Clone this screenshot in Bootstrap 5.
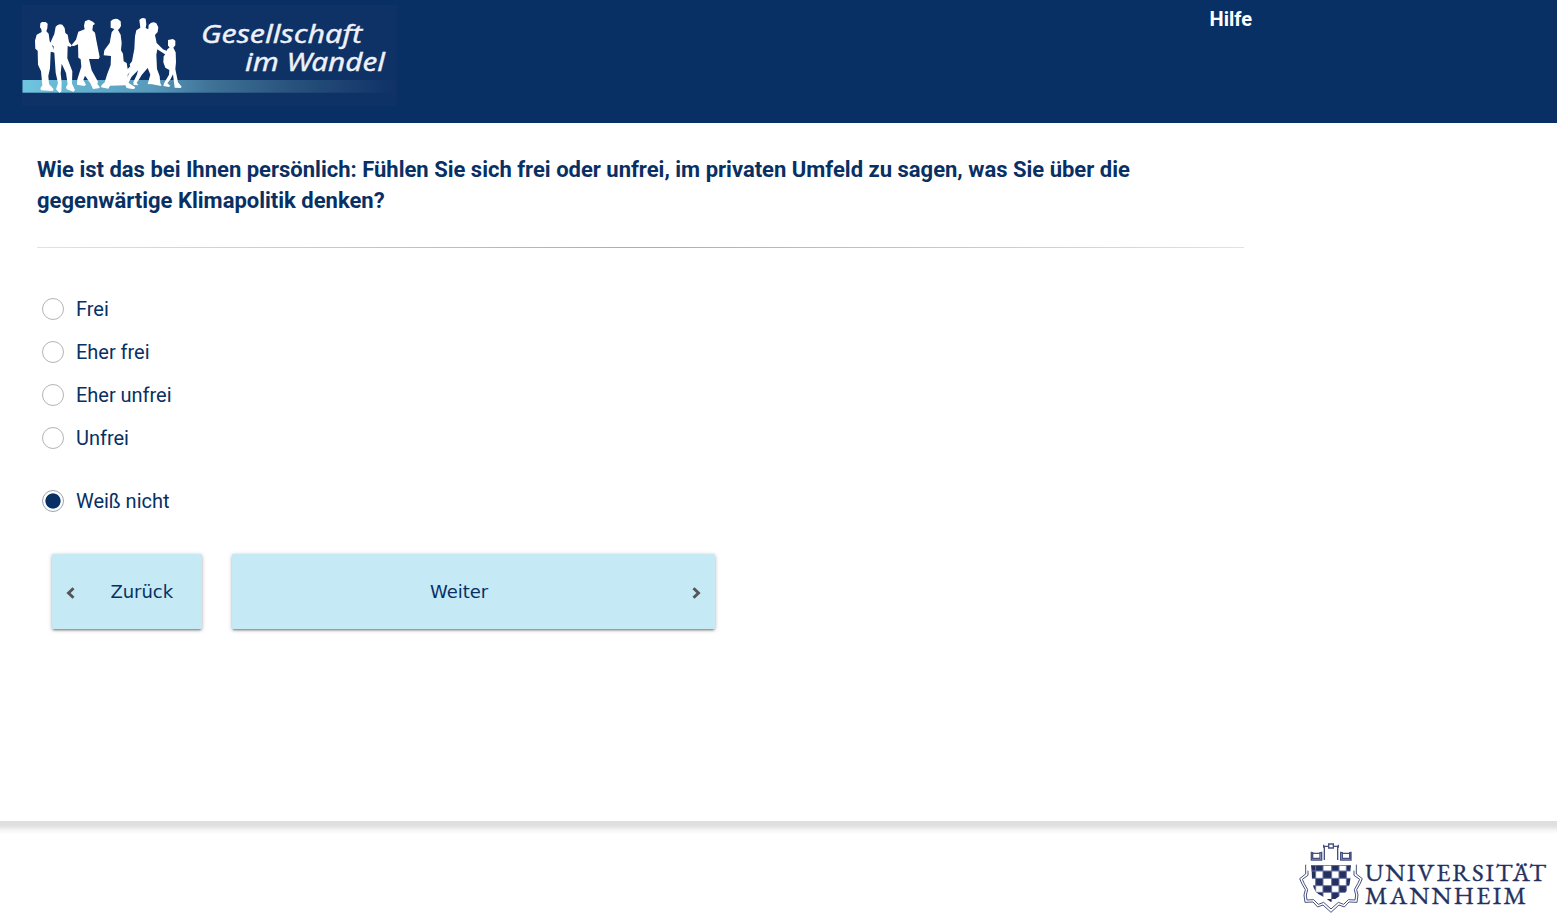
<!DOCTYPE html>
<html lang="de">
<head>
<meta charset="utf-8">
<title>Gesellschaft im Wandel</title>
<link href="https://cdn.jsdelivr.net/npm/bootstrap@5.3.0/dist/css/bootstrap.min.css" rel="stylesheet">
<style>
body{font-family:Roboto,sans-serif;color:#083064;height:920px;overflow:hidden;background:#fff}
.site-head{background:#083064;height:123px;padding:5px 305px 0 22px}
.site-head a{font-size:20px;line-height:28px;font-weight:700}
.logo-type{font-family:"Noto Sans","Open Sans",sans-serif;font-style:italic;fill:#eef2f8;stroke:#eef2f8;stroke-width:.35}
.survey{width:1244px;height:698px;padding:31px 0 0 37px}
.question{font-size:22px;line-height:31px;font-weight:700;margin:0;width:1130px}
.rule{height:1px;margin:31px 0 39px;background:linear-gradient(90deg,#e2e2e2,#adadad 50%,#e2e2e2)}
.answer{height:43px;padding-left:5px;gap:12px;font-size:20px;margin:0;letter-spacing:-.03px}
.answer .form-check-input{width:22px;height:22px;margin:0;border:1px solid #b4b4b4;background-color:#fff;box-shadow:none;float:none}
.answer .form-check-input:checked{border-color:#9aa3b5;background-image:radial-gradient(circle,#083064 7.2px,transparent 8px)}
.answer-extra{margin-top:20px}
.nav-actions{gap:30px;padding:32px 0 0 15px}
.step{height:75px;background:#c5e9f5;border:0;border-radius:1px;color:#083064;font:18px "DejaVu Sans",sans-serif;letter-spacing:-.06px;box-shadow:0 1px 4px rgba(0,0,0,.28),0 2px 2px -1px rgba(0,0,0,.4)}
.step-back{width:150px;padding:0 29px 0 13px}
.step-next{width:483px;padding:0 13px 0 0}
.step-next span{padding-right:6px}
.site-foot{height:99px;background:linear-gradient(#dedede,#e0e0e0 5px,#f4f4f4 9px,#fff 13px);padding:20px 8px 0 0}
.uni{font-family:"EB Garamond","Liberation Serif",serif;fill:#24305e;stroke:#24305e;stroke-width:.4}
</style>
</head>
<body class="d-flex flex-column">
<header class="site-head d-flex justify-content-between align-items-start flex-shrink-0">
<svg width="375" height="101" viewBox="22 5 375 101" role="img" aria-label="Gesellschaft im Wandel">
<defs><linearGradient id="band"><stop offset="0" stop-color="#6fc5df"/><stop offset=".35" stop-color="#5799bb"/><stop offset=".5" stop-color="#3f7397"/><stop offset=".72" stop-color="#28527d"/><stop offset="1" stop-color="#0f3166"/></linearGradient></defs>
<rect x="22" y="5" width="375" height="101" fill="#0e3166"/>
<rect x="22.500" y="80" width="374.500" height="12.700" fill="url(#band)"/>
<g transform="translate(15 0) scale(.33333)" fill="#fff">
<path d="M76 70L81 66 92 66 98 71 97 85 94 94 101 101 104 124 110 132 117 152 107 156 105 205 100 228 102 252 116 268 113 273 78 271 76 265 82 256 78 214 69 194 68 152 61 146 60 122 65 104 80 96 79 88 75 82z"/>
<path d="M122 80Q130 69 142 74L149 84 151 99 158 104 162 126 170 136 167 141 158 138 157 175 172 214 171 251 180 270 175 275 155 268 153 261 158 253 153 219 140 191 137 220 140 248 139 275 133 278 123 268 129 250 122 218 118 158 102 153 102 147 115 149 116 139 105 131 112 115 118 102z"/>
<path d="M210 64L221 59 234 65 240 72 234 76 232 91 240 98 244 121 254 171 251 177 222 177 230 211 249 245 247 252 255 262 251 265 234 267 226 250 210 227 205 240 213 254 208 258 186 254 187 238 199 200 197 178 190 173 189 133 177 138 168 137 183 119 190 95 209 88 207 77z"/>
<path d="M287 64Q294 54 308 57L317 64 318 78 314 85 309 90 317 104 320 129 318 151 324 161 326 184 335 189 338 207 346 199 350 210 338 224 340 248 352 256 361 262 358 266 335 264 331 256 285 257 280 266 258 262 260 255 269 247 277 221 287 195 288 168 266 166 268 151 284 129 290 97 298 87 287 83z"/>
<path d="M373 60Q381 50 392 56L394 73 392 84 400 88 401 75Q411 62 424 70L430 82 428 96 420 105 425 129 444 148 458 154 460 163 452 164 427 148 424 164 426 207 434 229 436 250 440 257 434 257 412 253 398 252 406 224 398 204 380 225 373 237 365 248 370 256 356 255 355 247 366 223 369 211 350 230 340 249 344 257 358 264 356 267 336 264 334 239 347 208 344 193 351 184 358 147 360 109 364 91 376 83z"/>
<path d="M459 120L474 117 481 122 481 136 475 143 482 157 483 187 481 207 489 247 500 260 497 264 479 263 474 223 467 237 457 250 466 257 462 261 445 258 447 250 462 224 463 210 451 203 445 187 446 169 455 158 456 149 464 142 459 137z"/>
</g>
<text class="logo-type" x="201" y="42.500" font-size="24.500" textLength="161" lengthAdjust="spacingAndGlyphs">Gesellschaft</text>
<text class="logo-type" x="245" y="71" font-size="24.500" textLength="140" lengthAdjust="spacingAndGlyphs">im Wandel</text>
</svg>
<a href="#" class="text-white text-decoration-none">Hilfe</a>
</header>
<main class="survey flex-shrink-0">
<h1 class="question">Wie ist das bei Ihnen persönlich: Fühlen Sie sich frei oder unfrei, im privaten Umfeld zu sagen, was Sie über die gegenwärtige Klimapolitik denken?</h1>
<div class="rule"></div>
<form>
<label class="answer d-flex align-items-center"><input class="form-check-input" type="radio" name="a"><span>Frei</span></label>
<label class="answer d-flex align-items-center"><input class="form-check-input" type="radio" name="a"><span>Eher frei</span></label>
<label class="answer d-flex align-items-center"><input class="form-check-input" type="radio" name="a"><span>Eher unfrei</span></label>
<label class="answer d-flex align-items-center"><input class="form-check-input" type="radio" name="a"><span>Unfrei</span></label>
<label class="answer answer-extra d-flex align-items-center"><input class="form-check-input" type="radio" name="a" checked><span>Weiß nicht</span></label>
<div class="nav-actions d-flex">
<button type="button" class="step step-back d-flex align-items-center justify-content-between"><svg width="10" height="14" viewBox="0 0 10 14" fill="none" stroke="#555" stroke-width="2.900"><path d="M8.500 3.200L3.500 8l5 4.800"/></svg><span>Zurück</span></button>
<button type="button" class="step step-next d-flex align-items-center"><span class="flex-fill text-center">Weiter</span><svg width="10" height="14" viewBox="0 0 10 14" fill="none" stroke="#555" stroke-width="2.900"><path d="M1.500 3.200L6.500 8l-5 4.800"/></svg></button>
</div>
</form>
</main>
<footer class="site-foot d-flex justify-content-end align-items-start flex-shrink-0">
<svg width="251" height="74" viewBox="1298 841 251 74" role="img" aria-label="Universität Mannheim">
<defs><clipPath id="shield"><path d="M63 90H183Q180 110 181 133 179 165 160 178 142 186 123 201 104 186 86 178 67 164 66 132 66 112 63 90z"/></clipPath></defs>
<g transform="translate(1290 835) scale(.33333)" fill="none" stroke="#46517f">
<g clip-path="url(#shield)"><path fill="#24305e" stroke="none" d="M63 90h14v18H63zM77 90h22v18H77zM125 90h22v18h-22zM169 90h16v18h-16zM60 108h17v22H60zM99 108h26v22H99zM147 108h22v22h-22zM77 130h22v22H77zM125 130h22v22h-22zM169 130h16v22h-16zM60 152h17v20H60zM99 152h26v20H99zM147 152h22v20h-22zM77 172h22v20H77zM125 172h22v20h-22zM99 192h26v14H99z"/>
<path stroke-width="3" stroke="#6570a0" d="M77 90v110M99 90v110M125 90v110M147 90v110M169 90v110M60 108h124M60 130h124M60 152h124M60 172h124M63 91h120"/></g>
<g stroke-width="4"><path d="M64 50v25h31V50M68 55h22v15H68zM152 50v25h31V50M157 55h22v15h-22zM62 53h8M88 53h8M151 53h8M177 53h8M103 75V34h13M143 75V34h-13M101 29v9M145 29v9M116 27h14v12h-14z"/>
<path stroke-width="3" d="M47 89V117L29 131 36 147 46 164 42 180 45 202 69 201 83 216 99 210 123 232 147 210 163 216 177 201 201 202 204 180 200 164 210 147 217 131 199 117V89"/>
<path stroke-width="3" d="M54 107V121L37 133 43 146 53 164 49 180 51 195 71 194 85 208 101 202 123 222 145 202 161 208 175 194 195 195 197 180 193 164 203 146 209 133 192 121V107"/></g>
</g>
<text class="uni" x="1365" y="881" font-size="25" textLength="181">UNIVERSITÄT</text>
<text class="uni" x="1365" y="904" font-size="25" textLength="161">MANNHEIM</text>
</svg>
</footer>
<script src="https://cdn.jsdelivr.net/npm/bootstrap@5.3.0/dist/js/bootstrap.bundle.min.js"></script>
</body>
</html>
